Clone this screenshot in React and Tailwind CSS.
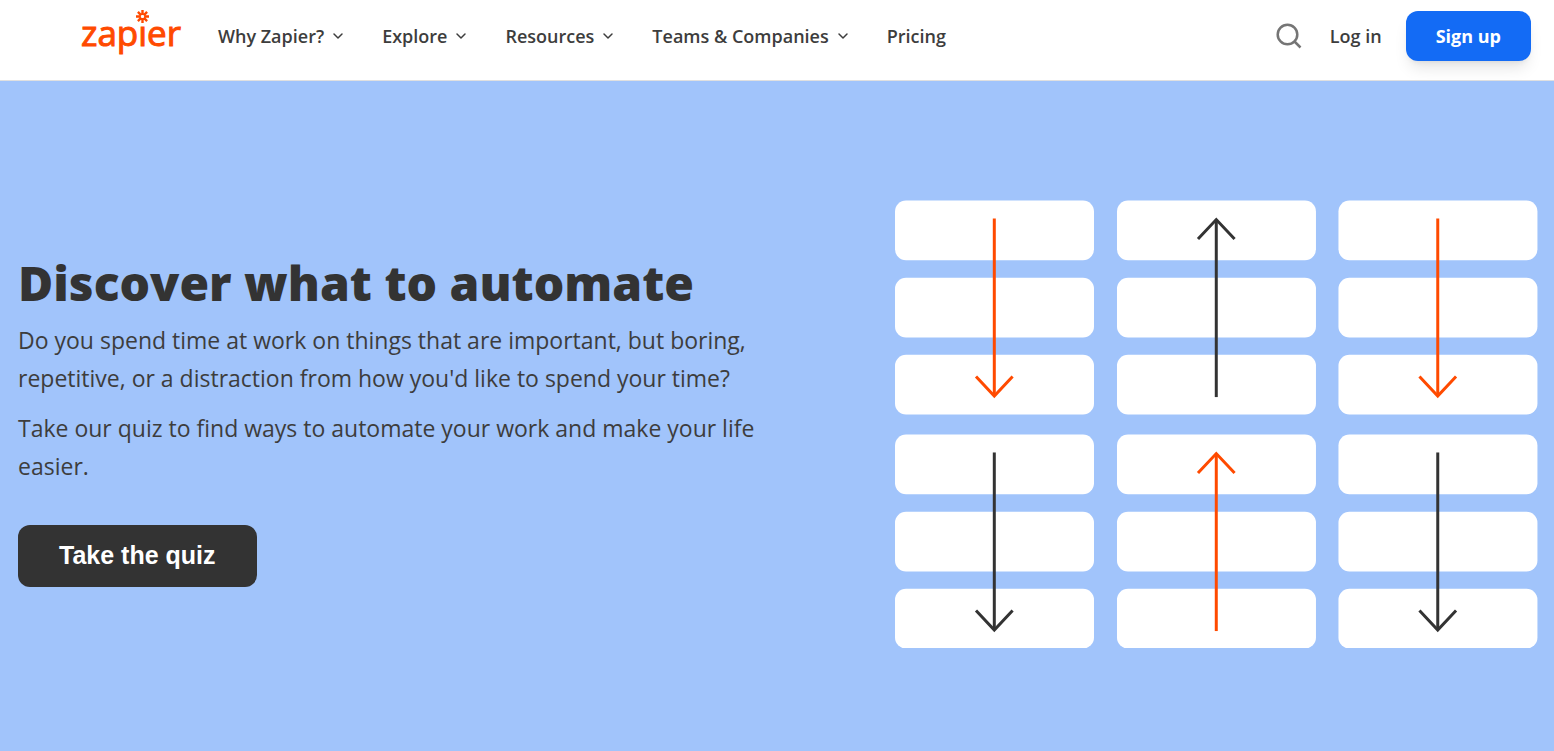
import { ChevronDown } from 'lucide-react'

const NAV_ITEMS = [
  { label: 'Why Zapier?', menu: true },
  { label: 'Explore', menu: true },
  { label: 'Resources', menu: true },
  { label: 'Teams & Companies', menu: true },
  { label: 'Pricing', menu: false },
]

const ORANGE = '#ff4a00'
const DARK = '#333333'

// one arrow per block of three cards, row by row
const ARROWS = [
  { x: 0, y: 0, up: false, color: ORANGE },
  { x: 222, y: 0, up: true, color: DARK },
  { x: 443.5, y: 0, up: false, color: ORANGE },
  { x: 0, y: 234, up: false, color: DARK },
  { x: 222, y: 234, up: true, color: ORANGE },
  { x: 443.5, y: 234, up: false, color: DARK },
]

function Logo() {
  return (
    <a href="#" aria-label="Zapier" className="shrink-0">
      <svg width="102" height="52" viewBox="0 0 102 52" fill="none">
        <text
          x="1"
          y="36"
          fontSize="35"
          fill={ORANGE}
          stroke={ORANGE}
          strokeWidth="1"
          className="font-['Open_Sans',sans-serif]"
        >
          zapıer
        </text>
        <g stroke={ORANGE} strokeWidth="2.4" transform="translate(62.5 6.5)">
          <path d="M0 -6.5V-1.6M0 1.6V6.5M-6.5 0H-1.6M1.6 0H6.5M-4.6 -4.6L-1.2 -1.2M1.2 1.2L4.6 4.6M-4.6 4.6L-1.2 1.2M1.2 -1.2L4.6 -4.6" />
        </g>
      </svg>
    </a>
  )
}

function SearchIcon() {
  return (
    <svg width="26" height="26" viewBox="0 0 26 26" fill="none" stroke="#757575" strokeWidth="2.5">
      <circle cx="11.5" cy="11.5" r="9.8" />
      <path d="M18 18L24.5 24.5" />
    </svg>
  )
}

function CardStack({ x, y, up, color }) {
  return (
    <g transform={`translate(${x} ${y})`}>
      {[0.5, 77.7, 154.8].map((top) => (
        <rect key={top} y={top} width="199" height="59.8" rx="11" fill="#fff" />
      ))}
      <g stroke={color} strokeWidth="3" transform={up ? 'rotate(180 99.3 107.8)' : undefined}>
        <path d="M99.3 18.5V196" />
        <path d="M81 176.5L99.3 196L117.6 176.5" />
      </g>
    </g>
  )
}

function Illustration() {
  return (
    <svg viewBox="0 0 643 449" fill="none" className="w-full" aria-hidden="true">
      {ARROWS.map((a) => (
        <CardStack key={`${a.x}-${a.y}`} {...a} />
      ))}
    </svg>
  )
}

export default function App() {
  return (
    <div className="min-h-screen flex flex-col bg-white text-[#3d3d3d] font-['Open_Sans',sans-serif]">
      <header className="flex items-center justify-between pl-20 pr-[23px] pt-2.5 pb-[18px] border-b border-[#e0e0e0]">
        <div className="flex items-center gap-9">
          <Logo />
          <nav className="flex items-center gap-9 text-lg leading-6 font-semibold">
            {NAV_ITEMS.map((item) =>
              item.menu ? (
                <button key={item.label} type="button" className="flex items-center gap-1.5">
                  {item.label}
                  <ChevronDown size={16} strokeWidth={2.25} />
                </button>
              ) : (
                <a key={item.label} href="#">{item.label}</a>
              )
            )}
          </nav>
        </div>
        <div className="flex items-center text-lg leading-6 font-semibold">
          <button type="button" aria-label="Search" className="mr-7">
            <SearchIcon />
          </button>
          <a href="#" className="mr-6">Log in</a>
          <a
            href="#"
            className="h-[50px] px-[30px] flex items-center rounded-xl bg-[#136bf5] text-white font-bold shadow-lg"
          >
            Sign up
          </a>
        </div>
      </header>

      <main className="flex-1 flex items-center justify-between bg-[#a1c4fb] pt-4 pl-[18px] pr-4">
        <div className="w-[49%]">
          <h1 className="text-5xl leading-11 font-extrabold text-[#333]">Discover what to automate</h1>
          <p className="mt-4 text-[23px] leading-[38px]">
            Do you spend time at work on things that are important, but boring, repetitive, or a distraction from how
            you'd like to spend your time?
          </p>
          <p className="mt-3 text-[23px] leading-[38px]">
            Take our quiz to find ways to automate your work and make your life easier.
          </p>
          <button
            type="button"
            className="mt-10 h-[62px] px-[41px] rounded-xl bg-[#333] text-white text-[25px] font-bold font-['Liberation_Sans',sans-serif]"
          >
            Take the quiz
          </button>
        </div>
        <div className="w-[42.3%]">
          <Illustration />
        </div>
      </main>
    </div>
  )
}
